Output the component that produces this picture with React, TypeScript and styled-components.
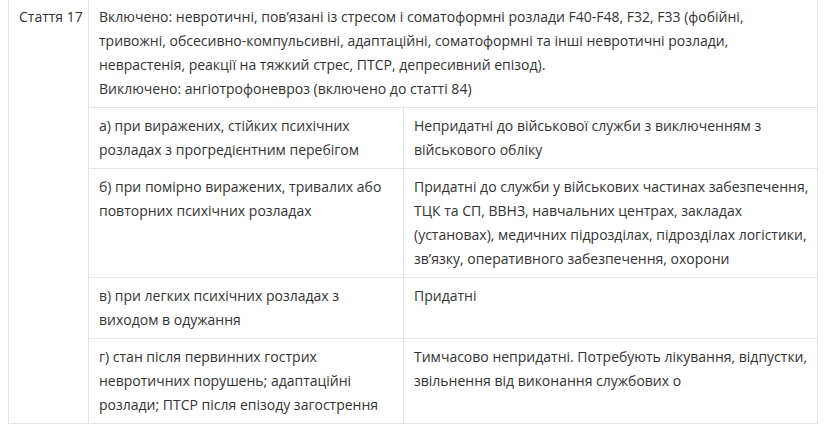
import styled, { createGlobalStyle } from "styled-components";

const GlobalStyle = createGlobalStyle`
    body {
        margin: 0;
        padding: 0 8px;
        background: #fff;
        font-family: "Open Sans", "Noto Sans", sans-serif;
        color: #333;
    }
`;

const StyledTable = styled.table`
    width: 809px;
    margin-top: -2px;
    table-layout: fixed;
    border-collapse: collapse;
    font-size: 14px;
    line-height: 24px;
    color: #333;
`;

const StyledCol = styled.col<{ $width: number }>`
    width: ${({ $width }) => $width}px;
`;

const StyledCell = styled.td<{ $nowrap?: boolean }>`
    padding: 6px 5px 6px 10px;
    border: 1px solid #e5e5e5;
    vertical-align: top;
    text-align: left;
    ${({ $nowrap }) => ($nowrap ? "white-space: nowrap;" : "")}
`;

const StyledLine = styled.div``;

interface Row {
    condition: string;
    verdict: string;
}

const rows: Row[] = [
    {
        condition: "а) при виражених, стійких психічних розладах з прогредієнтним перебігом",
        verdict: "Непридатні до військової служби з виключенням з військового обліку",
    },
    {
        condition: "б) при помірно виражених, тривалих або повторних психічних розладах",
        verdict:
            "Придатні до служби у військових частинах забезпечення, ТЦК та СП, ВВНЗ, навчальних центрах, закладах (установах), медичних підрозділах, підрозділах логістики, зв’язку, оперативного забезпечення, охорони",
    },
    {
        condition: "в) при легких психічних розладах з виходом в одужання",
        verdict: "Придатні",
    },
    {
        condition: "г) стан після первинних гострих невротичних порушень; адаптаційні розлади; ПТСР після епізоду загострення",
        verdict: "Тимчасово непридатні. Потребують лікування, відпустки, звільнення від виконання службових о",
    },
];

function App() {
    return (
        <>
            <GlobalStyle />
            <StyledTable>
                <colgroup>
                    <StyledCol $width={80} />
                    <StyledCol $width={315} />
                    <StyledCol $width={414} />
                </colgroup>
                <tbody>
                    <tr>
                        <StyledCell $nowrap rowSpan={rows.length + 1}>
                            Стаття 17
                        </StyledCell>
                        <StyledCell colSpan={2}>
                            <StyledLine>
                                Включено: невротичні, пов’язані із стресом і соматоформні розлади F40-F48, F32, F33 (фобійні,
                                тривожні, обсесивно-компульсивні, адаптаційні, соматоформні та інші невротичні розлади,
                                неврастенія, реакції на тяжкий стрес, ПТСР, депресивний епізод).
                            </StyledLine>
                            <StyledLine>Виключено: ангіотрофоневроз (включено до статті 84)</StyledLine>
                        </StyledCell>
                    </tr>
                    {rows.map((row, index) => (
                        <tr key={index}>
                            <StyledCell>{row.condition}</StyledCell>
                            <StyledCell>{row.verdict}</StyledCell>
                        </tr>
                    ))}
                </tbody>
            </StyledTable>
        </>
    );
}

export default App;
